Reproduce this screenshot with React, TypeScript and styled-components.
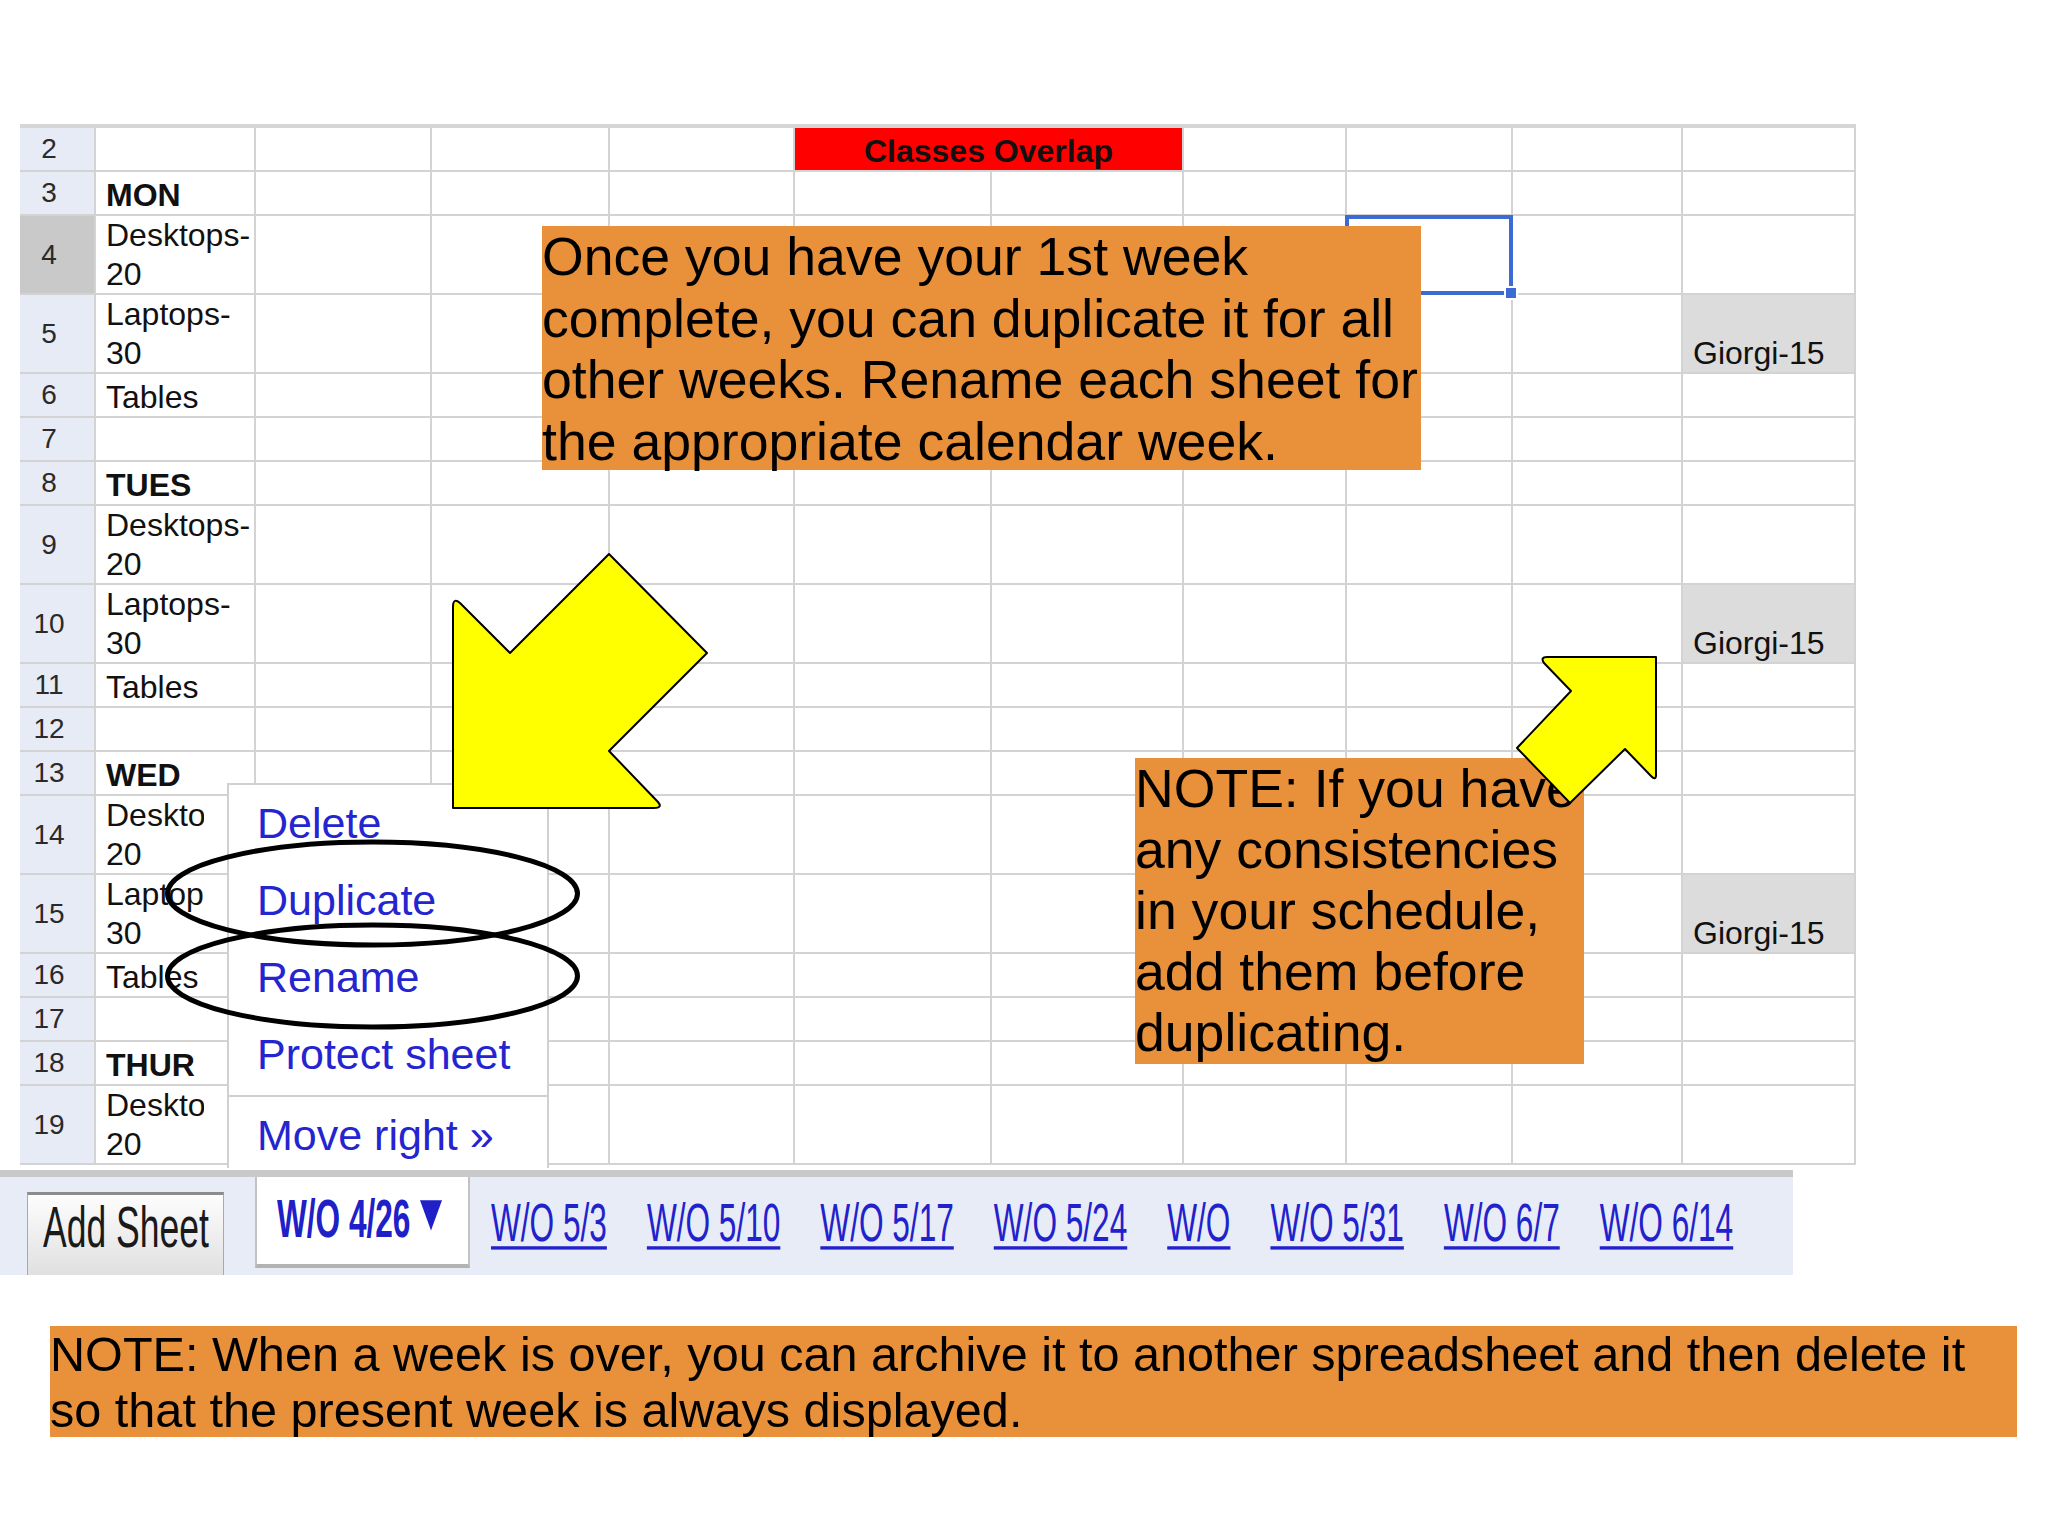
import React from 'react'
import styled, { createGlobalStyle } from 'styled-components'

const GlobalStyle = createGlobalStyle`
  html, body {
    margin: 0;
    padding: 0;
    background: #fff;
  }
  body {
    font-family: "Liberation Sans", Arial, sans-serif;
  }
`

const ORANGE = '#e8913a'
const LINK = '#2222cc'

// column widths of A..J (grid lines are the 2px gaps)
const COLS = [158, 174, 176, 183, 195, 190, 161, 164, 168, 171]

type Row = {
  n: number
  tall?: boolean
  a?: string
  bold?: boolean
  sel?: boolean
  giorgi?: boolean
  clip?: boolean
  red?: boolean
  cursor?: boolean
}

const rows: Row[] = [
  { n: 2, red: true },
  { n: 3, a: 'MON', bold: true },
  { n: 4, a: 'Desktops-\n20', tall: true, sel: true, cursor: true },
  { n: 5, a: 'Laptops-\n30', tall: true, giorgi: true },
  { n: 6, a: 'Tables' },
  { n: 7 },
  { n: 8, a: 'TUES', bold: true },
  { n: 9, a: 'Desktops-\n20', tall: true },
  { n: 10, a: 'Laptops-\n30', tall: true, giorgi: true },
  { n: 11, a: 'Tables' },
  { n: 12 },
  { n: 13, a: 'WED', bold: true },
  { n: 14, a: 'Desktops-\n20', tall: true, clip: true },
  { n: 15, a: 'Laptops-\n30', tall: true, giorgi: true, clip: true },
  { n: 16, a: 'Tables', clip: true },
  { n: 17, clip: true },
  { n: 18, a: 'THUR', bold: true, clip: true },
  { n: 19, a: 'Desktops-\n20', tall: true, clip: true },
]

const tabs = ['W/O 5/3', 'W/O 5/10', 'W/O 5/17', 'W/O 5/24', 'W/O', 'W/O 5/31', 'W/O 6/7', 'W/O 6/14']

const Page = styled.div`
  position: relative;
  width: 2048px;
  height: 1536px;
  overflow: hidden;
  padding-top: 124px;
  box-sizing: border-box;
  background: #fff;
`

const Sheet = styled.div<{ $rows: string }>`
  position: relative;
  z-index: 0;
  display: grid;
  grid-template-columns: 74px ${COLS.map((c) => c + 'px').join(' ')};
  grid-template-rows: ${(p) => p.$rows};
  gap: 2px;
  width: fit-content;
  margin-left: 20px;
  background: #d3d3d3;
  border-top: 4px solid #d6d6d6;
  border-bottom: 2px solid #d3d3d3;
  border-right: 2px solid #d3d3d3;
`

const RowHead = styled.div<{ $selected?: boolean }>`
  background: ${(p) => (p.$selected ? '#c9c9c9' : '#e7ebf5')};
  display: flex;
  align-items: center;
  justify-content: center;
  padding-right: 16px;
  font-size: 28px;
  color: #2a2a2a;
`

const Cell = styled.div<{ $fill?: string; $span?: number; $center?: boolean; $bold?: boolean }>`
  position: relative;
  grid-column: span ${(p) => p.$span || 1};
  background: ${(p) => p.$fill || '#fff'};
  display: flex;
  align-items: flex-end;
  justify-content: ${(p) => (p.$center ? 'center' : 'flex-start')};
  padding-left: ${(p) => (p.$center ? 0 : 10)}px;
  font-size: 32px;
  line-height: 38.5px;
  font-weight: ${(p) => (p.$bold ? 700 : 400)};
  color: #111;
  min-width: 0;
`

const CellText = styled.span<{ $clip?: boolean }>`
  display: block;
  white-space: pre;
  overflow: ${(p) => (p.$clip ? 'hidden' : 'visible')};
  max-width: ${(p) => (p.$clip ? '98px' : 'none')};
`

const Selection = styled.div`
  position: absolute;
  z-index: 1;
  top: -1px;
  left: -2px;
  right: -2px;
  bottom: -2px;
  border: 4px solid #3c6bd6;
`

const Handle = styled.div`
  position: absolute;
  right: -9px;
  bottom: -9px;
  width: 10px;
  height: 10px;
  background: #3c6bd6;
  border: 2px solid #fff;
`

const TabBar = styled.div`
  margin-top: 5px;
  width: 1793px;
  height: 105px;
  box-sizing: border-box;
  border-top: 7px solid #c9c9c9;
  background: #e8ecf6;
  display: flex;
  align-items: flex-start;
  padding-left: 27px;
`

const AddSheet = styled.div`
  margin-top: 15px;
  width: 197px;
  height: 83px;
  box-sizing: border-box;
  border-top: 3px solid #8c8c8c;
  border-left: 1px solid #a9a9a9;
  border-right: 1px solid #a9a9a9;
  background: linear-gradient(#fdfdfd, #e0e0e0);
  padding: 27px 0 0 15px;
`

const Stretched = styled.span<{ $size: number; $sy: number; $bold?: boolean; $color: string; $link?: boolean }>`
  display: inline-block;
  font-size: ${(p) => p.$size}px;
  line-height: ${(p) => p.$size}px;
  font-weight: ${(p) => (p.$bold ? 700 : 400)};
  color: ${(p) => p.$color};
  white-space: nowrap;
  transform: scaleY(${(p) => p.$sy});
  transform-origin: 50% 100%;
  text-decoration: ${(p) => (p.$link ? 'underline' : 'none')};
  text-decoration-thickness: 2px;
  text-underline-offset: 3px;
`

const ActiveTab = styled.div`
  margin-left: 31px;
  width: 215px;
  height: 91px;
  box-sizing: border-box;
  background: #fff;
  border-left: 2px solid #c2c2c2;
  border-right: 2px solid #c2c2c2;
  border-bottom: 4px solid #b3b3b3;
  padding: 38px 0 0 20px;
`

const Caret = styled.span`
  display: inline-block;
  width: 0;
  height: 0;
  margin-left: 10px;
  border-left: 11px solid transparent;
  border-right: 11px solid transparent;
  border-top: 18px solid #2020c8;
  vertical-align: 4px;
`

const Links = styled.div`
  display: flex;
  gap: 40px;
  margin-left: 21px;
  padding-top: 42px;
`

const BottomNote = styled.div`
  margin: 51px 0 0 50px;
  width: 1967px;
  height: 111px;
  background: ${ORANGE};
  font-size: 48.6px;
  line-height: 56px;
  color: #000;
  white-space: pre;
  overflow: hidden;
`

const Callout = styled.div<{ $x: number; $y: number; $w: number; $h: number; $lh: number }>`
  position: absolute;
  left: ${(p) => p.$x}px;
  top: ${(p) => p.$y}px;
  width: ${(p) => p.$w}px;
  height: ${(p) => p.$h}px;
  background: ${ORANGE};
  font-size: 53.6px;
  line-height: ${(p) => p.$lh}px;
  color: #000;
  white-space: pre;
`

const Menu = styled.div`
  position: absolute;
  left: 227px;
  top: 783px;
  width: 322px;
  height: 385px;
  box-sizing: border-box;
  background: #fff;
  border: 2px solid #d0d0d0;
  border-bottom: none;
  padding-left: 28px;
  overflow: hidden;
`

const MenuItem = styled.div`
  font-size: 43px;
  line-height: 77px;
  color: #2525d0;
  white-space: nowrap;
`

const MenuRule = styled.div`
  height: 2px;
  margin: 2px 0 0 -28px;
  background: #cfcfcf;
`

const Drawing = styled.svg<{ $x: number; $y: number }>`
  position: absolute;
  left: ${(p) => p.$x}px;
  top: ${(p) => p.$y}px;
  overflow: visible;
`

const App = () => {
  const template = rows.map((r) => (r.tall ? '77px' : '42px')).join(' ')

  return (
    <Page>
      <GlobalStyle />
      <Sheet $rows={template}>
        {rows.map((r) => (
          <React.Fragment key={r.n}>
            <RowHead $selected={r.sel}>{r.n}</RowHead>
            <Cell $bold={r.bold}>
              <CellText $clip={r.clip}>{r.a}</CellText>
            </Cell>
            <Cell />
            <Cell />
            <Cell />
            {r.red ? (
              <Cell $span={2} $fill="#ff0000" $center $bold>
                <CellText>Classes Overlap</CellText>
              </Cell>
            ) : (
              <>
                <Cell />
                <Cell />
              </>
            )}
            <Cell />
            <Cell>
              {r.cursor && (
                <Selection>
                  <Handle />
                </Selection>
              )}
            </Cell>
            <Cell />
            <Cell $fill={r.giorgi ? '#dcdcdc' : undefined}>
              {r.giorgi && <CellText>Giorgi-15</CellText>}
            </Cell>
          </React.Fragment>
        ))}
      </Sheet>

      <TabBar>
        <AddSheet>
          <Stretched $size={35.5} $sy={1.62} $color="#1a1a1a">
            Add Sheet
          </Stretched>
        </AddSheet>
        <ActiveTab>
          <Stretched $size={31.6} $sy={1.68} $bold $color="#2020c8">
            W/O 4/26
            <Caret />
          </Stretched>
        </ActiveTab>
        <Links>
          {tabs.map((t, i) => (
            <Stretched key={i} $size={31.6} $sy={1.68} $color={LINK} $link>
              {t}
            </Stretched>
          ))}
        </Links>
      </TabBar>

      <BottomNote>
        {'NOTE: When a week is over, you can archive it to another spreadsheet and then delete it\nso that the present week is always displayed.'}
      </BottomNote>

      <Callout $x={542} $y={226} $w={879} $h={244} $lh={61.5}>
        {'Once you have your 1st week\ncomplete, you can duplicate it for all\nother weeks. Rename each sheet for\nthe appropriate calendar week.'}
      </Callout>

      <Menu>
        <MenuItem>Delete</MenuItem>
        <MenuItem>Duplicate</MenuItem>
        <MenuItem>Rename</MenuItem>
        <MenuItem>Protect sheet</MenuItem>
        <MenuRule />
        <MenuItem>Move right »</MenuItem>
      </Menu>

      <Drawing $x={160} $y={835} width={430} height={200} viewBox="0 0 430 200">
        <ellipse cx={212.5} cy={58.5} rx={205} ry={51.5} fill="none" stroke="#000" strokeWidth={5} />
        <ellipse cx={212.5} cy={141} rx={205} ry={51} fill="none" stroke="#000" strokeWidth={5} />
      </Drawing>

      <Drawing $x={440} $y={545} width={280} height={275} viewBox="0 0 280 275">
        <path
          d="M169,9 L267,108 L169,206 L218,257 Q223,263 214,263 L13,263 L13,62 Q13,52 20,58 L70,108 Z"
          fill="#ffff00"
          stroke="#000"
          strokeWidth={2}
          strokeLinejoin="round"
        />
      </Drawing>

      <Callout $x={1135} $y={758} $w={449} $h={306} $lh={61}>
        {'NOTE: If you have\nany consistencies\nin your schedule,\nadd them before\nduplicating.'}
      </Callout>

      <Drawing $x={1505} $y={645} width={165} height={170} viewBox="0 0 165 170">
        <path
          d="M42,12 L151,12 L151,130 Q151,136 146,131 L120,104 L65,158 L12,103 L66,46 L39,18 Q35,12 42,12 Z"
          fill="#ffff00"
          stroke="#000"
          strokeWidth={2}
          strokeLinejoin="round"
        />
      </Drawing>
    </Page>
  )
}

export default App
